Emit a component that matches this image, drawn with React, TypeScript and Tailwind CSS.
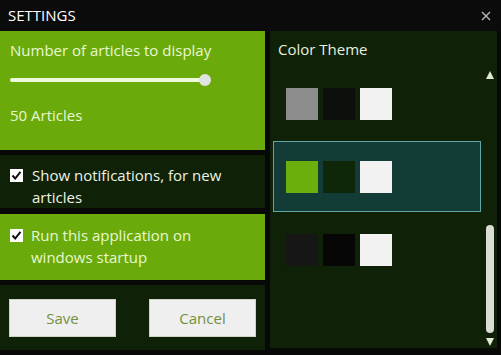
import React from "react";

const themes = [
  { colors: ["#8c8c8c", "#0c0f0b", "#f2f2f2"], selected: false },
  { colors: ["#6cae0c", "#0f2608", "#f2f2f2"], selected: true },
  { colors: ["#161616", "#050605", "#f2f2f2"], selected: false },
];

function CheckBox() {
  return (
    <div className="w-[13px] h-[13px] bg-white flex items-center justify-center shrink-0">
      <svg width="11" height="11" viewBox="0 0 11 11">
        <path d="M1.5 5.5 L4.2 8.5 L9.5 1.8" stroke="#111" strokeWidth="2" fill="none" />
      </svg>
    </div>
  );
}

export default function App() {
  return (
    <div
      className="w-[501px] h-[355px] bg-[#070807] flex flex-col overflow-hidden"
      style={{ fontFamily: "'Open Sans', 'Liberation Sans', sans-serif" }}
    >
      <div className="h-[31px] bg-[#0c0b0c] flex items-center justify-between pl-[8px] pr-[10px]">
        <span className="text-white text-[15px]">SETTINGS</span>
        <svg width="10" height="10" viewBox="0 0 10 10">
          <path d="M1 1 L9 9 M9 1 L1 9" stroke="#bdbdbd" strokeWidth="1.3" />
        </svg>
      </div>

      <div className="flex flex-1">
        <div className="w-[265px] flex flex-col">
          <div className="h-[119px] bg-[#6aab0b] px-[10px] pt-[9px] text-[#e9f7d2] text-[15px] leading-[20px]">
            <div>Number of articles to display</div>
            <div className="relative h-[12px] mt-[14px] w-[201px]">
              <div className="absolute left-0 right-[4px] top-[4px] h-[4px] rounded-full bg-[#eef8dc]" />
              <div className="absolute right-0 top-0 w-[12px] h-[12px] rounded-full bg-[#e2e2e2]" />
            </div>
            <div className="mt-[19px]">50 Articles</div>
          </div>

          <div className="h-[53px] mt-[5px] bg-[#0f2207] pl-[10px] pt-[9px] flex gap-[9px] text-[#eef2e6] text-[15px] leading-[22px]">
            <div className="pt-[5px]">
              <CheckBox />
            </div>
            <div>
              Show notifications, for new
              <br />
              articles
            </div>
          </div>

          <div className="h-[66px] mt-[6px] bg-[#6aab0b] pl-[10px] pt-[10px] flex gap-[8px] text-[#e9f7d2] text-[15px] leading-[22px]">
            <div className="pt-[5px]">
              <CheckBox />
            </div>
            <div>
              Run this application on
              <br />
              windows startup
            </div>
          </div>

          <div className="h-[65px] mt-[5px] bg-[#0f2207] px-[9px] pt-[14px] flex justify-between">
            <button className="w-[107px] h-[38px] bg-[#efefef] border border-[#cfd3c8] text-[#72903e] text-[15px]">
              Save
            </button>
            <button className="w-[107px] h-[38px] bg-[#efefef] border border-[#cfd3c8] text-[#72903e] text-[15px]">
              Cancel
            </button>
          </div>
        </div>

        <div className="w-[5px]" />

        <div className="w-[227px] h-[317px] bg-[#0f2207] flex">
          <div className="flex-1 flex flex-col pt-[8px]">
            <div className="pl-[8px] text-[#e8eedd] text-[15px] leading-[20px]">Color Theme</div>
            <div className="mt-[28px] flex flex-col">
              {themes.map((t, i) => (
                <div
                  key={i}
                  className={
                    t.selected
                      ? "mt-[21px] mb-[21px] ml-[3px] w-[208px] h-[71px] border border-[#5fa7a3] bg-[#143c37] flex items-center gap-[5px] pl-[12px]"
                      : "ml-[3px] w-[208px] h-[33px] flex items-center gap-[5px] pl-[13px]"
                  }
                >
                  {t.colors.map((c, j) => (
                    <div key={j} className="w-[32px] h-[32px]" style={{ backgroundColor: c }} />
                  ))}
                </div>
              ))}
            </div>
          </div>
          <div className="w-[14px] flex flex-col items-center pt-[40px] pb-[2px]">
            <svg width="8" height="8" viewBox="0 0 8 8">
              <path d="M4 0 L8 8 L0 8 Z" fill="#dfe9d6" />
            </svg>
            <div className="flex-1" />
            <div className="w-[8px] h-[108px] rounded-full bg-[#d9ddd3]" />
            <svg className="mt-[5px]" width="8" height="8" viewBox="0 0 8 8">
              <path d="M0 0 L8 0 L4 8 Z" fill="#dfe9d6" />
            </svg>
          </div>
        </div>
      </div>
    </div>
  );
}
